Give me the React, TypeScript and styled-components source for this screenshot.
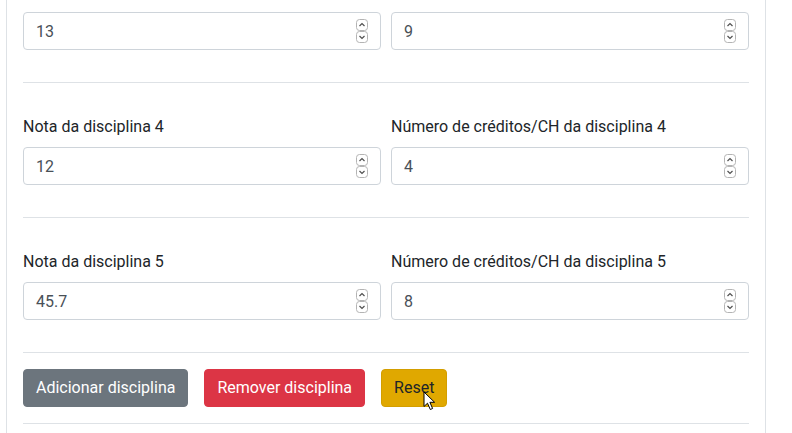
import React from 'react'
import styled, { createGlobalStyle } from 'styled-components'

const GlobalStyle = createGlobalStyle`
  body {
    margin: 0;
    background: #fff;
    font-family: Roboto, "Liberation Sans", sans-serif;
    overflow: hidden;
  }
`

const Page = styled.div`
  padding-left: 6px;
  height: 433px;
  overflow: hidden;
`

const Card = styled.div`
  width: 726px;
  margin-top: -20px;
  padding: 0 16px 40px;
  border-left: 1px solid #dee2e6;
  border-right: 1px solid #dee2e6;
  background: #fff;
`

const Row = styled.div`
  display: grid;
  grid-template-columns: 1fr 1fr;
  column-gap: 10px;
`

const Field = styled.div`
  display: flex;
  flex-direction: column;
`

const Label = styled.label`
  display: block;
  margin-bottom: 8px;
  font-size: 16px;
  line-height: 24px;
  color: #212529;
`

const InputBox = styled.div`
  box-sizing: border-box;
  height: 38px;
  display: flex;
  align-items: center;
  justify-content: space-between;
  padding: 0 12px;
  border: 1px solid #ced4da;
  border-radius: 4px;
  font-size: 16px;
  color: #495057;
  background: #fff;
`

const Divider = styled.hr<{ $top?: number; $bottom?: number }>`
  border: 0;
  border-top: 1px solid #dee2e6;
  margin: ${(p) => p.$top ?? 32}px 0 ${(p) => p.$bottom ?? 32}px;
`

const Actions = styled.div`
  display: flex;
  gap: 16px;
`

const variants = {
  secondary: { bg: '#6c757d', border: '#6c757d', color: '#fff' },
  danger: { bg: '#dc3545', border: '#dc3545', color: '#fff' },
  warning: { bg: '#e0a800', border: '#d39e00', color: '#212529' },
}

const Button = styled.button<{ $variant: keyof typeof variants }>`
  position: relative;
  padding: 6px 12px;
  font-family: inherit;
  font-size: 16px;
  line-height: 24px;
  border-radius: 4px;
  border: 1px solid ${(p) => variants[p.$variant].border};
  background: ${(p) => variants[p.$variant].bg};
  color: ${(p) => variants[p.$variant].color};
  cursor: pointer;
`

const Cursor = styled.svg`
  position: absolute;
  left: 41px;
  top: 21px;
  pointer-events: none;
`

const Spinner = () => (
  <svg width="12" height="24" viewBox="0 0 12 24">
    <rect x="0.5" y="0.5" width="11" height="11" rx="3" fill="#fff" stroke="#b4b4b4" />
    <rect x="0.5" y="12.5" width="11" height="11" rx="3" fill="#fff" stroke="#b4b4b4" />
    <path d="M3.5 7 L6 4.5 L8.5 7" fill="none" stroke="#505050" strokeWidth="1.2" />
    <path d="M3.5 17 L6 19.5 L8.5 17" fill="none" stroke="#505050" strokeWidth="1.2" />
  </svg>
)

const rows = [
  { n: 3, grade: '13', credits: '9' },
  { n: 4, grade: '12', credits: '4' },
  { n: 5, grade: '45.7', credits: '8' },
]

const App = () => (
  <Page>
    <GlobalStyle />
    <Card>
      {rows.map((row, i) => (
        <React.Fragment key={row.n}>
          {i > 0 && <Divider />}
          <Row>
            <Field>
              <Label>Nota da disciplina {row.n}</Label>
              <InputBox>
                <span>{row.grade}</span>
                <Spinner />
              </InputBox>
            </Field>
            <Field>
              <Label>Número de créditos/CH da disciplina {row.n}</Label>
              <InputBox>
                <span>{row.credits}</span>
                <Spinner />
              </InputBox>
            </Field>
          </Row>
        </React.Fragment>
      ))}
      <Divider $bottom={16} />
      <Actions>
        <Button $variant="secondary">Adicionar disciplina</Button>
        <Button $variant="danger">Remover disciplina</Button>
        <Button $variant="warning">
          Reset
          <Cursor width="13" height="20" viewBox="0 0 13 20">
            <path
              d="M1 1 L1 15.5 L4.5 12.2 L7.3 18.5 L9.6 17.5 L6.9 11.3 L11.6 11.3 Z"
              fill="#fff"
              stroke="#000"
              strokeWidth="1"
              strokeLinejoin="round"
            />
          </Cursor>
        </Button>
      </Actions>
      <Divider $top={16} />
    </Card>
  </Page>
)

export default App
